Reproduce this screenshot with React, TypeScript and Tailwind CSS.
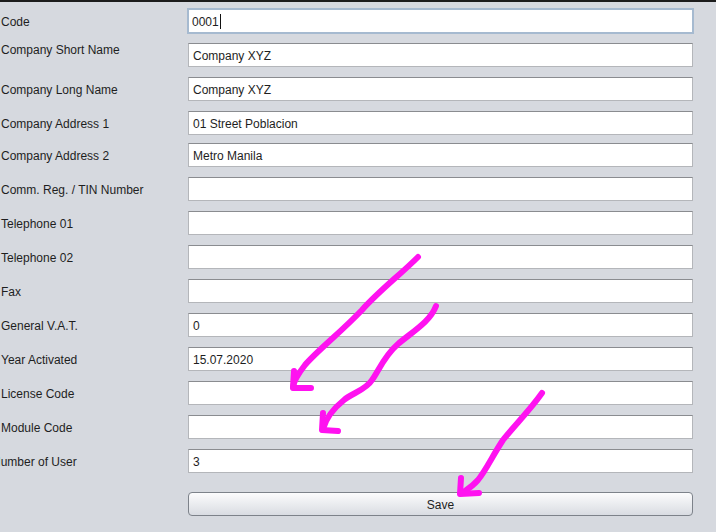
const rows = [
  { label: "Company Short Name", value: "Company XYZ", mt: "mt-[9px]", up: true },
  { label: "Company Long Name", value: "Company XYZ", mt: "mt-[10px]" },
  { label: "Company Address 1", value: "01 Street Poblacion", mt: "mt-[10px]" },
  { label: "Company Address 2", value: "Metro Manila", mt: "mt-[8px]" },
  { label: "Comm. Reg. / TIN Number", value: "", mt: "mt-[10px]" },
  { label: "Telephone 01", value: "", mt: "mt-[10px]" },
  { label: "Telephone 02", value: "", mt: "mt-[10px]" },
  { label: "Fax", value: "", mt: "mt-[10px]" },
  { label: "General V.A.T.", value: "0", mt: "mt-[10px]" },
  { label: "Year Activated", value: "15.07.2020", mt: "mt-[10px]" },
  { label: "License Code", value: "", mt: "mt-[10px]" },
  { label: "Module Code", value: "", mt: "mt-[10px]" },
  { label: "Number of User", value: "3", mt: "mt-[10px]", cut: true },
];

const Arrows = () => (
  <svg
    className="absolute inset-0 pointer-events-none"
    width="716"
    height="532"
    viewBox="0 0 716 532"
    fill="none"
    stroke="#ff12f0"
    strokeWidth="6"
    strokeLinecap="round"
    strokeLinejoin="round"
  >
    <path d="M418 257 C400 275 380 290 362 310 C340 333 318 350 305 365 C298 374 294 380 293 387" />
    <path d="M294 371 L293 388 L311 388" />
    <path d="M436 306 C430 322 412 332 398 344 C384 356 378 372 372 380 C366 390 352 393 344 400 C334 408 326 418 323 429" />
    <path d="M323 413 L322 430 L338 431" />
    <path d="M542 393 C530 410 515 425 503 440 C493 455 486 470 478 480 C472 487 466 490 462 493" />
    <path d="M461 478 L460 494 L479 493" />
  </svg>
);

export default function App() {
  return (
    <div
      className="relative w-[716px] h-[532px] overflow-hidden bg-[#d6d9df] text-[12px] text-[#1e1e1e]"
      style={{ fontFamily: '"Liberation Sans", Arial, sans-serif' }}
    >
      <div className="h-[2px] bg-[#1c1c1c]" />
      <div className="flex flex-col">
        <div className="flex items-center mt-[6px] h-[26px]">
          <div className="w-[187px] pl-[1px] pt-[2px]">Code</div>
          <div className="w-[507px] h-[26px] bg-white border-2 border-[#a6bad0] flex items-center pl-[3px] pt-[1px]">
            <span>0001</span>
            <span className="ml-[1px] w-[1px] h-[15px] bg-[#111]" />
          </div>
        </div>
        {rows.map((r) => (
          <div key={r.label} className={`flex ${r.up ? "items-start" : "items-center"} h-[24px] ${r.mt}`}>
            <div
              className={`w-[188px] whitespace-nowrap ${r.up ? "-mt-[2px]" : "pt-[1px]"} ${r.cut ? "-ml-[8px]" : "pl-[1px]"}`}
              style={r.cut ? { width: 196 } : undefined}
            >
              {r.label}
            </div>
            <div className="w-[505px] h-[24px] bg-white border border-[#b4b6ba] border-t-[#8a8c90] flex items-center pl-[4px] pt-[2px]">
              {r.value}
            </div>
          </div>
        ))}
        <div className="flex mt-[19px]">
          <div className="w-[188px]" />
          <button className="w-[505px] h-[24px] pt-[1px] rounded-[4px] border border-[#7d828a] bg-gradient-to-b from-[#fcfcfd] to-[#d9dce2] text-[12px] text-[#1e1e1e]">
            Save
          </button>
        </div>
      </div>
      <Arrows />
    </div>
  );
}
